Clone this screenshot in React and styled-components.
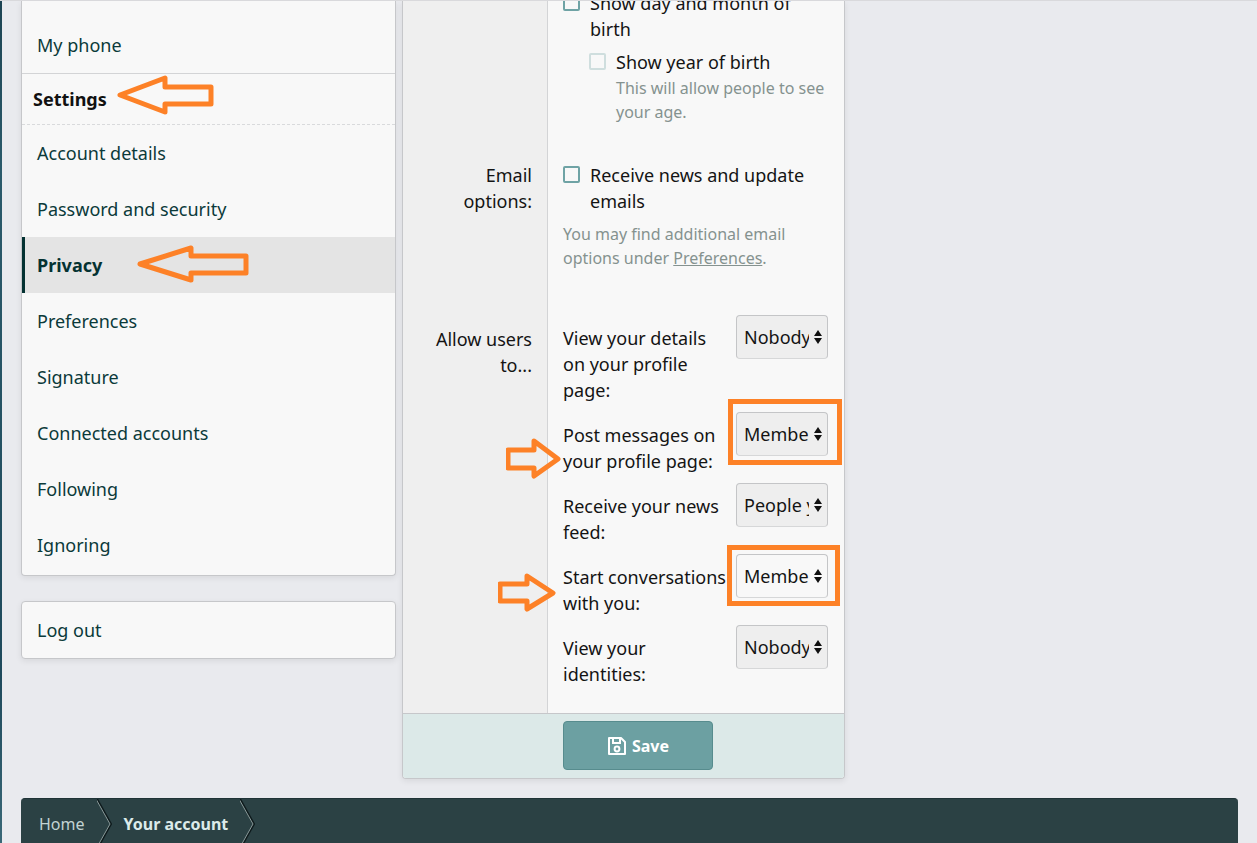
import React from "react";
import styled, { createGlobalStyle, css } from "styled-components";

const GlobalStyle = createGlobalStyle`
  *, *::before, *::after {
    box-sizing: border-box;
  }

  body {
    margin: 0;
    background: #e9eaee;
    color: #141414;
    font-family: "Noto Sans", "Open Sans", sans-serif;
    font-size: 18px;
    line-height: 26px;
  }
`;

const Page = styled.div`
  height: 100vh;
  overflow: hidden;
  border-top: 1px solid #d9d9dc;
  background: linear-gradient(#1d4453, #2b5a6b 20%, #1f4a5c 80%, #3a6877) left / 2px 100% no-repeat;
`;

const Columns = styled.div`
  display: flex;
  align-items: flex-start;
  gap: 6px;
  padding: 0 19px 0 21px;
`;

const Sidebar = styled.aside`
  flex: 0 1 375px;
  display: flex;
  flex-direction: column;
  gap: 25px;
`;

const Card = styled.nav`
  background: #f8f8f8;
  border: 1px solid #c6c7ca;
  border-radius: 4px;
  box-shadow: 0 2px 6px rgba(0, 0, 0, 0.08);

  ${(p) =>
    p.$continued &&
    css`
      border-top: 0;
      border-radius: 0 0 4px 4px;
      padding: 16px 0 2px;
    `}
`;

const NavHeading = styled.h3`
  position: relative;
  margin: 0;
  padding: 12px 11px;
  border-top: 1px solid #d3d4d6;
  border-bottom: 1px dashed #d9dadc;
  color: #111;
  font-size: 18px;
  font-weight: 700;
`;

const NavLink = styled.a`
  position: relative;
  display: block;
  padding: 15px;
  color: #0b3a3a;
  text-decoration: none;

  ${(p) =>
    p.$active &&
    css`
      padding-left: 12px;
      border-left: 3px solid #043232;
      background: #e4e4e4;
      color: #043232;
      font-weight: 700;
    `}
`;

const Form = styled.form`
  flex: 0 1 443px;
  min-width: 0;
  background: #f8f8f8;
  border: 1px solid #c6c7ca;
  border-top: 0;
  border-radius: 0 0 4px 4px;
  box-shadow: 0 2px 6px rgba(0, 0, 0, 0.08);
`;

const FormRow = styled.div`
  display: grid;
  grid-template-columns: 145px 1fr;
`;

const RowLabel = styled.div`
  padding: 16px 15px 0;
  border-right: 1px solid #d3d4d6;
  background: #efefef;
  text-align: right;
`;

const RowBody = styled.div`
  padding: ${(p) => p.$top}px 16px ${(p) => p.$bottom}px 15px;
`;

/* the row above the fold continues upwards out of the window */
const ContinuedBody = styled(RowBody)`
  margin-top: -11px;
`;

const CheckLabel = styled.label`
  display: flex;
  align-items: flex-start;
  gap: 10px;
`;

const Checkbox = styled.input.attrs({ type: "checkbox" })`
  appearance: none;
  flex: none;
  width: 17px;
  height: 17px;
  margin: 4px 0;
  border: 2px solid #6fa3a5;
  border-radius: 2px;
  background: transparent;

  &:checked {
    background: #6fa3a5;
  }

  &:disabled {
    border-color: #cfdede;
  }
`;

const Nested = styled.div`
  margin: 7px 0 0 26px;
`;

const Hint = styled.div`
  margin-top: ${(p) => p.$gap || 0}px;
  padding-left: ${(p) => p.$indent || 0}px;
  color: #85928f;
  font-size: 16px;
  line-height: 24px;

  a {
    color: inherit;
  }
`;

const PermissionRow = styled.div`
  position: relative;
  display: grid;
  grid-template-columns: 1fr 92px;
  align-items: start;
  gap: 10px;

  & + & {
    margin-top: 9px;
  }

  label {
    padding-top: 10px;
  }
`;

const SelectWrap = styled.div`
  position: relative;
`;

const Select = styled.select`
  appearance: none;
  display: block;
  width: 100%;
  height: 44px;
  padding: 0 18px 0 7px;
  border: 1px solid #c4c5c7;
  border-bottom-color: #d6d7d8;
  border-radius: 4px;
  background: ${(p) => (p.$focused ? "#f8f8f8" : "#eee")};
  color: #141414;
  font: inherit;
`;

const SelectArrow = styled.svg`
  position: absolute;
  top: 15px;
  right: 6px;
  pointer-events: none;
`;

const Highlight = styled.span`
  position: absolute;
  inset: ${(p) => p.$inset};
  border: 5px solid #fd8127;
  pointer-events: none;
`;

const Arrow = styled.svg`
  position: absolute;
  left: ${(p) => p.$left}px;
  top: ${(p) => p.$top}px;
  fill: none;
  stroke: #fd8127;
  stroke-width: 5;
  stroke-linejoin: round;
  pointer-events: none;
`;

const SubmitBar = styled.div`
  padding: 7px 15px 8px 160px;
  border-top: 1px solid #c6c7ca;
  border-radius: 0 0 3px 3px;
  background: #dce9e8;
`;

const SaveButton = styled.button`
  display: flex;
  align-items: center;
  justify-content: center;
  gap: 5px;
  width: 150px;
  height: 49px;
  border: 1px solid #578c8e;
  border-radius: 4px;
  background: #6ca0a2;
  color: #fff;
  font: inherit;
  font-size: 16px;
  font-weight: 700;
`;

const Breadcrumbs = styled.nav`
  display: flex;
  align-items: center;
  gap: 12px;
  height: 50px;
  margin: 19px 19px 0 21px;
  padding-left: 18px;
  border-top: 1px solid #1f3336;
  border-radius: 4px 4px 0 0;
  background: #2b4144;
  font-size: 16px;
`;

const Crumb = styled.a`
  color: ${(p) => (p.$current ? "#dcebea" : "#c3d3d3")};
  font-weight: ${(p) => (p.$current ? 700 : 400)};
  text-decoration: none;
`;

const settingsLinks = [
  "Account details",
  "Password and security",
  "Privacy",
  "Preferences",
  "Signature",
  "Connected accounts",
  "Following",
  "Ignoring",
];

const permissions = [
  { id: "details", label: "View your details on your profile page:", value: "Nobody" },
  {
    id: "post",
    label: "Post messages on your profile page:",
    value: "Members only",
    highlight: "-13px -14px -9px -8px",
    arrow: { left: -57, top: 26, w: 56, h: 42, d: "M2 12H28V3L52 21L28 38V30H2Z" },
  },
  { id: "feed", label: "Receive your news feed:", value: "People you follow" },
  {
    id: "conversation",
    label: "Start conversations with you:",
    value: "Members only",
    focused: true,
    highlight: "-9px -12px -8px -9px",
    arrow: { left: -65, top: 19, w: 59, h: 40, d: "M2 11H29V3L55 20L29 36V28H2Z" },
  },
  { id: "identities", label: "View your identities:", value: "Nobody" },
];

const Chevron = () => (
  <svg width="15" height="50" viewBox="0 0 15 50" fill="none">
    <path d="M0 0L14 25L0 50" stroke="#0e1a1c" strokeWidth="2" />
    <path d="M-1 0L13 25L-1 50" stroke="#8b9c9c" />
  </svg>
);

const SaveIcon = () => (
  <svg width="20" height="20" viewBox="0 0 20 20" fill="none" stroke="#fff" strokeWidth="2">
    <path d="M2 2H14L18 6V18H2Z" strokeLinejoin="round" />
    <path d="M6 2V7H13V2" />
    <circle cx="10" cy="13" r="2.4" />
  </svg>
);

const App = () => {
  return (
    <>
      <GlobalStyle />
      <Page>
        <Columns>
          <Sidebar>
            <Card $continued>
              <NavLink href="#phone">My phone</NavLink>
              <NavHeading>
                Settings
                <Arrow $left={95} $top={1} width="98" height="40">
                  <path d="M3 20L48 3V12H94V29H48V37Z" />
                </Arrow>
              </NavHeading>
              {settingsLinks.map((name) => (
                <NavLink key={name} href="#settings" $active={name === "Privacy"}>
                  {name}
                  {name === "Privacy" && (
                    <Arrow $left={112} $top={8} width="113" height="40">
                      <path d="M3 19L54 3V11H109V28H54V35Z" />
                    </Arrow>
                  )}
                </NavLink>
              ))}
            </Card>
            <Card>
              <NavLink href="#logout">Log out</NavLink>
            </Card>
          </Sidebar>

          <Form onSubmit={(e) => e.preventDefault()}>
            <FormRow>
              <RowLabel />
              <ContinuedBody $top={0} $bottom={22}>
                <CheckLabel>
                  <Checkbox />
                  <span>Show day and month of birth</span>
                </CheckLabel>
                <Nested>
                  <CheckLabel>
                    <Checkbox disabled />
                    <span>Show year of birth</span>
                  </CheckLabel>
                  <Hint $gap={1} $indent={27}>
                    This will allow people to see your age.
                  </Hint>
                </Nested>
              </ContinuedBody>
            </FormRow>

            <FormRow>
              <RowLabel>Email options:</RowLabel>
              <RowBody $top={16} $bottom={40}>
                <CheckLabel>
                  <Checkbox />
                  <span>Receive news and update emails</span>
                </CheckLabel>
                <Hint $gap={8}>
                  You may find additional email options under{" "}
                  <a href="#preferences">Preferences</a>.
                </Hint>
              </RowBody>
            </FormRow>

            <FormRow>
              <RowLabel>Allow users to...</RowLabel>
              <RowBody $top={5} $bottom={26}>
                {permissions.map((item) => (
                  <PermissionRow key={item.id}>
                    <label htmlFor={item.id}>{item.label}</label>
                    <SelectWrap>
                      <Select id={item.id} defaultValue={item.value} $focused={item.focused}>
                        <option>Nobody</option>
                        <option>Members only</option>
                        <option>People you follow</option>
                      </Select>
                      <SelectArrow width="8" height="14" viewBox="0 0 8 14">
                        <path d="M4 0L8 6H0ZM0 8H8L4 14Z" fill="#111" />
                      </SelectArrow>
                      {item.highlight && <Highlight $inset={item.highlight} />}
                    </SelectWrap>
                    {item.arrow && (
                      <Arrow
                        $left={item.arrow.left}
                        $top={item.arrow.top}
                        width={item.arrow.w}
                        height={item.arrow.h}
                      >
                        <path d={item.arrow.d} />
                      </Arrow>
                    )}
                  </PermissionRow>
                ))}
              </RowBody>
            </FormRow>

            <SubmitBar>
              <SaveButton type="submit">
                <SaveIcon />
                Save
              </SaveButton>
            </SubmitBar>
          </Form>
        </Columns>

        <Breadcrumbs>
          <Crumb href="#home">Home</Crumb>
          <Chevron />
          <Crumb href="#account" $current>
            Your account
          </Crumb>
          <Chevron />
        </Breadcrumbs>
      </Page>
    </>
  );
};

export default App;
